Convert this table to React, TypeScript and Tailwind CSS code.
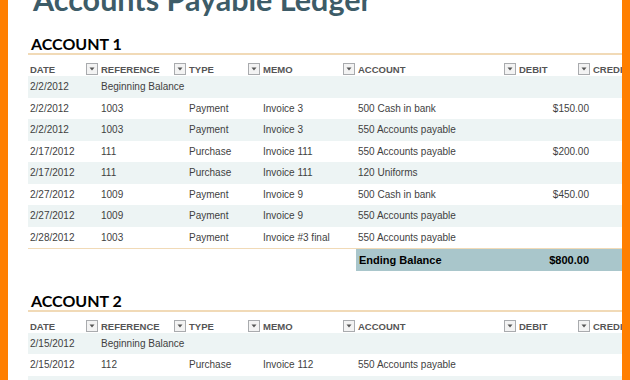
import React from "react";

type Row = { date: string; ref: string; type: string; memo: string; account: string; debit: string };

const acc1: Row[] = [
  { date: "2/2/2012", ref: "Beginning Balance", type: "", memo: "", account: "", debit: "" },
  { date: "2/2/2012", ref: "1003", type: "Payment", memo: "Invoice 3", account: "500 Cash in bank", debit: "$150.00" },
  { date: "2/2/2012", ref: "1003", type: "Payment", memo: "Invoice 3", account: "550 Accounts payable", debit: "" },
  { date: "2/17/2012", ref: "111", type: "Purchase", memo: "Invoice 111", account: "550 Accounts payable", debit: "$200.00" },
  { date: "2/17/2012", ref: "111", type: "Purchase", memo: "Invoice 111", account: "120 Uniforms", debit: "" },
  { date: "2/27/2012", ref: "1009", type: "Payment", memo: "Invoice 9", account: "500 Cash in bank", debit: "$450.00" },
  { date: "2/27/2012", ref: "1009", type: "Payment", memo: "Invoice 9", account: "550 Accounts payable", debit: "" },
  { date: "2/28/2012", ref: "1003", type: "Payment", memo: "Invoice #3 final", account: "550 Accounts payable", debit: "" },
];

const acc2: Row[] = [
  { date: "2/15/2012", ref: "Beginning Balance", type: "", memo: "", account: "", debit: "" },
  { date: "2/15/2012", ref: "112", type: "Purchase", memo: "Invoice 112", account: "550 Accounts payable", debit: "" },
  { date: "", ref: "", type: "", memo: "", account: "", debit: "" },
];

const grid = "grid grid-cols-[71px_88px_74px_95px_161px_74px_60px]";

function Drop() {
  return (
    <span className="absolute right-[1px] top-[8px] w-[12px] h-[12px] border border-[#a9abae] bg-[#f3f3f3] flex items-center justify-center">
      <svg width="6" height="4" viewBox="0 0 6 4">
        <path d="M0.5 0.5 L5.5 0.5 L3 3.5 Z" fill="#555" />
      </svg>
    </span>
  );
}

function Header() {
  const cols = ["DATE", "REFERENCE", "TYPE", "MEMO", "ACCOUNT", "DEBIT", "CREDIT"];
  return (
    <div className={`${grid} h-[21px] text-[9.5px] font-bold text-[#555555]`}>
      {cols.map((c, i) => (
        <div key={c} className="relative pl-[2px] pt-[9px] leading-[12px] whitespace-nowrap">
          {c}
          {i < 6 && <Drop />}
        </div>
      ))}
    </div>
  );
}

function DataRow({ r, shaded }: { r: Row; shaded: boolean }) {
  return (
    <div className={`${grid} h-[21.5px] items-center text-[10px] text-[#3f3f3f] ${shaded ? "bg-[#edf4f4]" : "bg-white"}`}>
      <div className="pl-[2px] whitespace-nowrap">{r.date}</div>
      <div className="pl-[2px] whitespace-nowrap">{r.ref}</div>
      <div className="pl-[2px] whitespace-nowrap">{r.type}</div>
      <div className="pl-[2px] whitespace-nowrap">{r.memo}</div>
      <div className="pl-[2px] whitespace-nowrap">{r.account}</div>
      <div className="pr-[2px] text-right whitespace-nowrap">{r.debit}</div>
      <div />
    </div>
  );
}

function Heading({ text }: { text: string }) {
  return (
    <div className="pl-[3px] h-[24px] text-[16px] leading-[26px] font-bold text-black border-b-2 border-[#f1dab7]" style={{ fontFamily: "Lato, sans-serif" }}>
      {text}
    </div>
  );
}

export default function App() {
  return (
    <div className="w-[630px] h-[380px] overflow-hidden flex bg-white" style={{ fontFamily: '"Liberation Sans", Arial, sans-serif' }}>
      <div className="w-[8px] shrink-0 bg-[#ff7f00]" />
      <div className="flex-1 overflow-hidden pl-[20px]">
        <div
          className="mt-[-17px] pl-[5px] h-[32px] text-[30.5px] leading-[32px] font-bold text-[#3d5c68] whitespace-nowrap"
          style={{ fontFamily: "Lato, sans-serif" }}
        >
          Accounts Payable Ledger
        </div>
        <div className="mt-[16px]">
          <Heading text="ACCOUNT 1" />
          <Header />
          {acc1.map((r, i) => (
            <DataRow key={i} r={r} shaded={i % 2 === 0} />
          ))}
          <div className="border-t border-[#f1dab7]" />
          <div className={`${grid} h-[21.5px] items-center text-[11px] font-bold text-black`}>
            <div />
            <div />
            <div />
            <div />
            <div className="pl-[3px] bg-[#a9c6cb] h-full flex items-center">Ending Balance</div>
            <div className="pr-[2px] bg-[#a9c6cb] h-full flex items-center justify-end">$800.00</div>
            <div className="bg-[#a9c6cb] h-full" />
          </div>
        </div>
        <div className="mt-[17px]">
          <Heading text="ACCOUNT 2" />
          <Header />
          {acc2.map((r, i) => (
            <DataRow key={i} r={r} shaded={i % 2 === 0} />
          ))}
        </div>
      </div>
      <div className="w-[8px] shrink-0 bg-[#ff7f00]" />
    </div>
  );
}
